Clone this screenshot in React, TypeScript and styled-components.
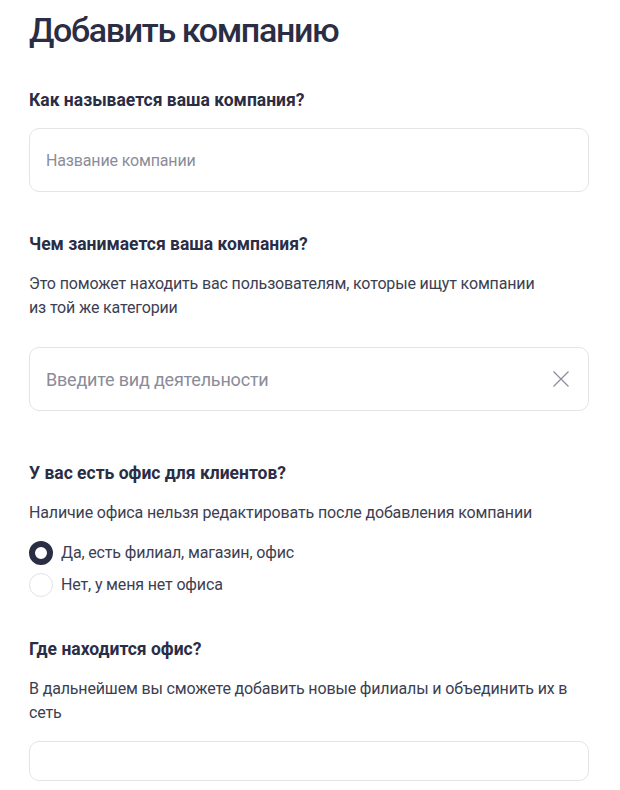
import { ReactElement } from 'react';
import styled, { createGlobalStyle } from 'styled-components';

const GlobalStyle = createGlobalStyle`
  body {
    margin: 0;
    background: #fff;
    font-family: Roboto, "Noto Sans", sans-serif;
    color: #2b2d45;
  }
`;

function ClearIcon(): ReactElement {
  return (
    <svg width="16" height="16" viewBox="0 0 16 16" fill="none">
      <path d="M0.5 0.5L15.5 15.5M15.5 0.5L0.5 15.5" stroke="#8a8c99" strokeWidth="1.2" />
    </svg>
  );
}

interface IRadioProps {
  checked?: boolean;
  label: string;
}

function Radio({ checked, label }: IRadioProps): ReactElement {
  return (
    <RadioRow>
      <RadioCircle $checked={checked} />
      <RadioLabel>{label}</RadioLabel>
    </RadioRow>
  );
}

export default function App(): ReactElement {
  return (
    <Page>
      <GlobalStyle />
      <Title>Добавить компанию</Title>

      <Section>
        <Question>Как называется ваша компания?</Question>
        <Field>
          <Placeholder>Название компании</Placeholder>
        </Field>
      </Section>

      <Section>
        <Question>Чем занимается ваша компания?</Question>
        <Hint>
          Это поможет находить вас пользователям, которые ищут компании
          <br />
          из той же категории
        </Hint>
        <Field $offset>
          <Placeholder $large>Введите вид деятельности</Placeholder>
          <ClearIcon />
        </Field>
      </Section>

      <Section $wide>
        <Question>У вас есть офис для клиентов?</Question>
        <Hint>Наличие офиса нельзя редактировать после добавления компании</Hint>
        <RadioGroup>
          <Radio checked label="Да, есть филиал, магазин, офис" />
          <Radio label="Нет, у меня нет офиса" />
        </RadioGroup>
      </Section>

      <Section>
        <Question>Где находится офис?</Question>
        <Hint>
          В дальнейшем вы сможете добавить новые филиалы и объединить их в
          <br />
          сеть
        </Hint>
        <Field $short />
      </Section>
    </Page>
  );
}

const Page = styled.div`
  width: 560px;
  padding: 10px 0 0 29px;
  display: flex;
  flex-direction: column;
`;

const Title = styled.h1`
  margin: 0;
  font-size: 34px;
  line-height: 40px;
  font-weight: 500;
  letter-spacing: -1.35px;
  color: #2b2d45;
`;

const Section = styled.section<{ $wide?: boolean }>`
  display: flex;
  flex-direction: column;
  margin-top: ${(p) => (p.$wide ? '50px' : '40px')};

  &:first-of-type {
    margin-top: 38px;
  }
`;

const Question = styled.h2`
  margin: 0 0 16px;
  font-size: 17.5px;
  line-height: 24px;
  font-weight: 700;
  color: #2b2d45;
`;

const Hint = styled.p`
  margin: 0 0 16px;
  font-size: 16px;
  line-height: 24px;
  letter-spacing: -0.15px;
  color: #3c3e52;
`;

const Field = styled.div<{ $short?: boolean; $offset?: boolean }>`
  box-sizing: border-box;
  height: ${(p) => (p.$short ? '40px' : '64px')};
  margin-top: ${(p) => (p.$offset ? '11px' : '0')};
  border: 1px solid #e4e4e8;
  border-radius: 10px;
  padding: 0 19px 0 16px;
  display: flex;
  align-items: center;
  justify-content: space-between;
`;

const Placeholder = styled.span<{ $large?: boolean }>`
  font-size: ${(p) => (p.$large ? '18px' : '16px')};
  letter-spacing: ${(p) => (p.$large ? '-0.2px' : '-0.15px')};
  color: #8a8c99;
`;

const RadioGroup = styled.div`
  display: flex;
  flex-direction: column;
  gap: 8px;
`;

const RadioRow = styled.label`
  display: flex;
  align-items: center;
  gap: 8px;
`;

const RadioCircle = styled.span<{ $checked?: boolean }>`
  box-sizing: border-box;
  flex: none;
  width: 24px;
  height: 24px;
  border-radius: 50%;
  border: ${(p) => (p.$checked ? '6.5px solid #2b2d45' : '1.5px solid #e2e2e8')};
  background: #fff;
`;

const RadioLabel = styled.span`
  font-size: 16px;
  line-height: 24px;
  letter-spacing: -0.15px;
  color: #3c3e52;
`;
